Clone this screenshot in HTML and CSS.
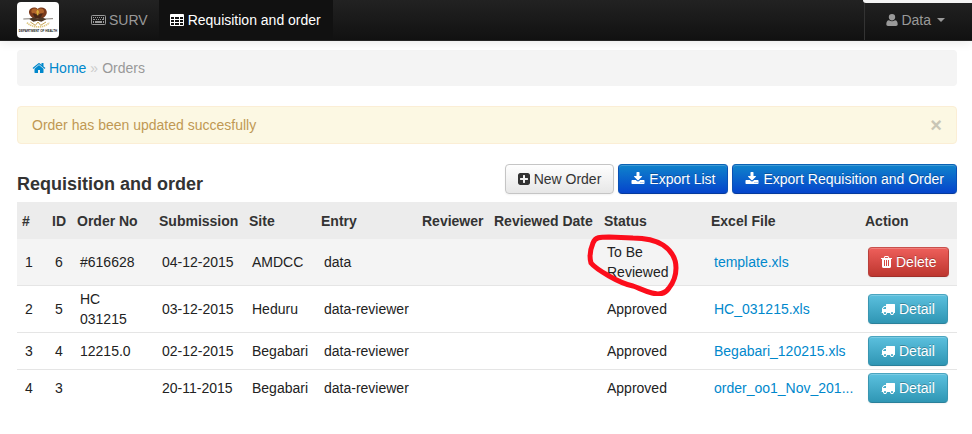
FILE: index.html
```html
<!DOCTYPE html>
<html lang="en">
<head>
<meta charset="utf-8">
<title>Requisition and order</title>
<link rel="stylesheet" href="styles.css">
</head>
<body>
<svg class="sprite" aria-hidden="true">
  <symbol id="home" viewBox="0 0 1792 1792"><path d="M1472 992v480q0 26-19 45t-45 19h-384v-384h-256v384h-384q-26 0-45-19t-19-45v-480q0-1 .5-3t.5-3l575-474 575 474q1 2 1 6zm223-69l-62 74q-8 9-21 11h-3q-13 0-21-7l-692-577-692 577q-12 8-24 7-13-2-21-11l-62-74q-8-10-7-23.5t11-21.5l719-599q32-26 76-26t76 26l244 204v-195q0-14 9-23t23-9h192q14 0 23 9t9 23v408l219 182q10 8 11 21.5t-7 23.5z"/></symbol>
  <symbol id="plus" viewBox="128 0 1536 1792"><path d="M1408 960v-128q0-26-19-45t-45-19h-320v-320q0-26-19-45t-45-19h-128q-26 0-45 19t-19 45v320h-320q-26 0-45 19t-19 45v128q0 26 19 45t45 19h320v320q0 26 19 45t45 19h128q26 0 45-19t19-45v-320h320q26 0 45-19t19-45zm256-544v960q0 119-84.5 203.5t-203.5 84.5h-960q-119 0-203.5-84.5t-84.5-203.5v-960q0-119 84.5-203.5t203.5-84.5h960q119 0 203.5 84.5t84.5 203.5z"/></symbol>
  <symbol id="download" viewBox="0 0 1792 1792"><path d="M1344 1344q0-26-19-45t-45-19-45 19-19 45 19 45 45 19 45-19 19-45zm256 0q0-26-19-45t-45-19-45 19-19 45 19 45 45 19 45-19 19-45zm128-224v320q0 40-28 68t-68 28h-1472q-40 0-68-28t-28-68v-320q0-40 28-68t68-28h465l135 136q58 56 136 56t136-56l136-136h464q40 0 68 28t28 68zm-325-569q17 41-14 70l-448 448q-18 19-45 19t-45-19l-448-448q-31-29-14-70 17-39 59-39h256v-448q0-26 19-45t45-19h256q26 0 45 19t19 45v448h256q42 0 59 39z"/></symbol>
  <symbol id="trash" viewBox="192 0 1408 1792"><path d="M704 1376v-704q0-14-9-23t-23-9h-64q-14 0-23 9t-9 23v704q0 14 9 23t23 9h64q14 0 23-9t9-23zm256 0v-704q0-14-9-23t-23-9h-64q-14 0-23 9t-9 23v704q0 14 9 23t23 9h64q14 0 23-9t9-23zm256 0v-704q0-14-9-23t-23-9h-64q-14 0-23 9t-9 23v704q0 14 9 23t23 9h64q14 0 23-9t9-23zm-544-992h448l-48-117q-7-9-17-11h-317q-10 2-17 11zm928 32v64q0 14-9 23t-23 9h-96v948q0 83-47 143.5t-113 60.5h-832q-66 0-113-58.5t-47-141.5v-952h-96q-14 0-23-9t-9-23v-64q0-14 9-23t23-9h309l70-167q15-37 54-63t79-26h320q40 0 79 26t54 63l70 167h309q14 0 23 9t9 23z"/></symbol>
  <symbol id="truck" viewBox="0 0 1792 1792"><path d="M640 1408q0-52-38-90t-90-38-90 38-38 90 38 90 90 38 90-38 38-90zm-384-512h384v-256h-158q-13 0-22 9l-195 195q-9 9-9 22v30zm1280 512q0-52-38-90t-90-38-90 38-38 90 38 90 90 38 90-38 38-90zm256-1088v1024q0 15-4 26.5t-13.5 18.5-16.5 11.5-23.5 6-22.5 2-25.5 0-22.5-.5q0 106-75 181t-181 75-181-75-75-181h-384q0 106-75 181t-181 75-181-75-75-181h-64q-3 0-22.5.5t-25.5 0-22.5-2-23.5-6-16.5-11.5-13.5-18.5-4-26.5q0-26 19-45t45-19v-320q0-8-.5-35t0-38 2.5-34.5 6.5-37 14-30.5 22.5-30l198-198q19-19 50.5-32t58.5-13h160v-192q0-26 19-45t45-19h1024q26 0 45 19t19 45z"/></symbol>
  <symbol id="user" viewBox="0 0 14 14"><path d="M7 1a3.200 3.200 0 0 1 3.200 3.200C10.200 6 8.800 7.600 7 7.600S3.800 6 3.800 4.200A3.200 3.200 0 0 1 7 1zM4 7.200c.8.700 1.800 1.100 3 1.100s2.200-.4 3-1.100c1.900 0 2.700 1.800 2.700 4.100 0 1.100-.7 1.700-1.700 1.700H3c-1 0-1.700-.6-1.700-1.700 0-2.300.8-4.100 2.700-4.100z"/></symbol>
  <symbol id="table" viewBox="0 0 14 14"><path fill-rule="evenodd" d="M1 1h12a1 1 0 0 1 1 1v10a1 1 0 0 1-1 1H1a1 1 0 0 1-1-1V2a1 1 0 0 1 1-1zM1 4v2h3v-2zM5 4v2h4v-2zM10 4v2h3v-2zM1 7v2h3v-2zM5 7v2h4v-2zM10 7v2h3v-2zM1 10v2h3v-2zM5 10v2h4v-2zM10 10v2h3v-2z"/></symbol>
  <symbol id="keyboard" viewBox="0 0 15 14"><rect x=".5" y="2.500" width="14" height="9" rx=".8" fill="none" stroke="currentColor"/><path d="M2 4h1v1H2zM4 4h1v1H4zM6 4h1v1H6zM8 4h1v1H8zM10 4h1v1h-1zM12 4h1v3h-2V6h1zM2 6h2v1H2zM5 6h1v1H5zM7 6h1v1H7zM9 6h1v1H9zM2 8h1v2H2zM4 8h7v2H4zM12 8h1v2h-1z"/></symbol>
</svg>

<header class="navbar">
  <a class="brand" href="#">
    <svg class="logo" viewBox="0 0 126 108" role="img" aria-label="Department of Health">
      <path fill="#7a3a1c" d="M62 21C55 14 39 15 36 28c-1 10 6 17 15 22h24c9-5 16-12 14-22C86 15 70 14 62 21z"/>
      <path fill="#b0642c" d="M62 24c-5-6-17-6-19 3-1 7 6 9 10 6l9 9 9-9c5 3 11 0 10-6-2-9-14-9-19-3z"/>
      <path fill="#482818" d="M47 34l11 3 4-7 5 7 11-3-8 15H54z"/>
      <path fill="#d9ac39" d="M58 29l4-7 4 7-2 11h-4z"/>
      <path fill="none" stroke="#443b31" stroke-width="2" d="M19 51l26-1 15 2 23-1 25-1"/>
      <path fill="#4d3928" d="M37 51l12-5 12 4 13-4 14 6-15 7-11-3-13 3z"/>
      <path fill="none" stroke="#dfc77f" stroke-width="5" stroke-dasharray="4 2" d="M30 62c14 15 49 19 67 0"/>
      <path fill="none" stroke="#c6a454" stroke-width="3" d="M40 60l15 10 8-10 8 10 16-10"/>
      <text class="logo-text" x="63" y="90" text-anchor="middle">DEPARTMENT OF HEALTH</text>
    </svg>
  </a>
  <nav class="menu">
    <a href="#"><svg class="icon wide"><use href="#keyboard"/></svg>SURV</a>
    <a class="active" href="#"><svg class="icon"><use href="#table"/></svg>Requisition and order</a>
  </nav>
  <button class="account" type="button"><svg class="icon"><use href="#user"/></svg>Data<span class="caret"></span></button>
</header>

<main class="container">
  <nav class="breadcrumb">
    <a href="#"><svg class="icon"><use href="#home"/></svg>Home</a>
    <span class="divider">»</span>
    <span class="current">Orders</span>
  </nav>

  <div class="alert" role="status">
    <span>Order has been updated succesfully</span>
    <button class="close" type="button" aria-label="Close">×</button>
  </div>

  <div class="toolbar">
    <h1>Requisition and order</h1>
    <div class="actions">
      <button class="btn" type="button"><svg class="icon medium"><use href="#plus"/></svg>New Order</button>
      <button class="btn primary" type="button"><svg class="icon"><use href="#download"/></svg>Export List</button>
      <button class="btn primary" type="button"><svg class="icon"><use href="#download"/></svg>Export Requisition and Order</button>
    </div>
  </div>

  <table class="orders">
    <colgroup>
      <col class="c-num"><col class="c-id"><col class="c-order"><col class="c-submission"><col class="c-site"><col class="c-entry"><col class="c-reviewer"><col class="c-date"><col class="c-status"><col class="c-file"><col class="c-action">
    </colgroup>
    <thead>
      <tr><th>#</th><th>ID</th><th>Order No</th><th>Submission</th><th>Site</th><th>Entry</th><th>Reviewer</th><th>Reviewed Date</th><th>Status</th><th>Excel File</th><th>Action</th></tr>
    </thead>
    <tbody>
      <tr class="pending">
        <td>1</td><td>6</td><td>#616628</td><td>04-12-2015</td><td>AMDCC</td><td>data</td><td></td><td></td>
        <td class="marked">To Be Reviewed<svg class="mark" viewBox="0 0 92 62" aria-hidden="true"><path d="M6 9C8 3 13 3 22 3L46 4C58 4 68 6 76 11C85 17 89 25 89 34C89 43 86 49 82 54C78 60 72 61 65 59C57 57 52 54 46 52C36 50 29 46 22 42C15 38 8 34 4 29C2 22 3 16 6 9Z"/></svg></td>
        <td class="file"><a href="#">template.xls</a></td>
        <td><button class="btn danger" type="button"><svg class="icon narrow"><use href="#trash"/></svg>Delete</button></td>
      </tr>
      <tr>
        <td>2</td><td>5</td><td>HC 031215</td><td>03-12-2015</td><td>Heduru</td><td>data-reviewer</td><td></td><td></td><td>Approved</td>
        <td class="file"><a href="#">HC_031215.xls</a></td>
        <td><button class="btn info" type="button"><svg class="icon"><use href="#truck"/></svg>Detail</button></td>
      </tr>
      <tr>
        <td>3</td><td>4</td><td>12215.0</td><td>02-12-2015</td><td>Begabari</td><td>data-reviewer</td><td></td><td></td><td>Approved</td>
        <td class="file"><a href="#">Begabari_120215.xls</a></td>
        <td><button class="btn info" type="button"><svg class="icon"><use href="#truck"/></svg>Detail</button></td>
      </tr>
      <tr>
        <td>4</td><td>3</td><td></td><td>20-11-2015</td><td>Begabari</td><td>data-reviewer</td><td></td><td></td><td>Approved</td>
        <td class="file"><a href="#">order_oo1_Nov_201...</a></td>
        <td><button class="btn info" type="button"><svg class="icon"><use href="#truck"/></svg>Detail</button></td>
      </tr>
    </tbody>
  </table>
</main>
</body>
</html>
```
FILE: styles.css
```css
* { box-sizing: border-box; }

body {
  margin: 0;
  background: #fff;
  color: #333;
  font: 14px/20px "Liberation Sans", Arial, sans-serif;
}

button { font: inherit; cursor: pointer; }
a { color: #0088cc; text-decoration: none; }

.sprite { display: none; }

.icon {
  flex: none;
  width: 14px;
  height: 14px;
  margin-right: 3px;
  fill: currentColor;
  vertical-align: -2px;
}
.icon.wide { width: 15px; }
.icon.medium { width: 12px; }
.icon.narrow { width: 11px; }

/* Top bar */
.navbar {
  position: relative;
  display: flex;
  height: 41px;
  padding-left: 17px;
  background: linear-gradient(#222, #111);
  border-bottom: 1px solid #252525;
  box-shadow: 0 1px 10px rgba(0, 0, 0, 0.1);
}
.navbar::after {
  content: "";
  position: absolute;
  top: 0;
  right: 0;
  width: 109px;
  height: 3px;
  background: #f4f4f4;
  border-bottom-left-radius: 3px;
}
.brand {
  display: flex;
  align-items: center;
  margin-right: 17px;
}
.logo {
  width: 42px;
  height: 36px;
  background: #fff;
  border-radius: 4px;
}
.logo-text {
  font: bold 9px "Liberation Sans", Arial, sans-serif;
  fill: #222;
}
.menu { display: flex; }
.menu a {
  display: flex;
  align-items: center;
  padding: 0 11px 0 15px;
  color: #999;
}
.menu .active {
  padding: 0 12px 0 11px;
  background: #111;
  color: #fff;
}
.menu .active .icon { margin-right: 4px; }
.account {
  display: flex;
  align-items: center;
  margin-left: auto;
  padding: 0 27px 0 20px;
  background: none;
  border: 0;
  border-left: 1px solid #333;
  color: #999;
}
.account .icon { margin-right: 2px; }
.caret {
  margin-left: 6px;
  border: 4px solid transparent;
  border-top-color: #999;
  border-bottom: 0;
}

/* Page */
.container { padding: 9px 15px 24px 17px; }

.breadcrumb {
  display: flex;
  gap: 4px;
  margin-bottom: 20px;
  padding: 8px 15px;
  background: #f4f4f4;
  border-radius: 4px;
}
.divider { color: #ccc; }
.current { color: #999; }

.alert {
  display: flex;
  justify-content: space-between;
  margin-bottom: 20px;
  padding: 8px 14px;
  background: #fcf8e3;
  border: 1px solid #fbeed5;
  border-radius: 4px;
  color: #c09853;
}
.close {
  padding: 0;
  background: none;
  border: 0;
  color: #c9c6b6;
  font-size: 20px;
  font-weight: bold;
  line-height: 20px;
}

.toolbar {
  display: flex;
  justify-content: space-between;
  align-items: center;
  margin-bottom: 8px;
}
h1 {
  margin: 10px 0 0;
  font-size: 18px;
  line-height: 20px;
}
.actions { display: flex; gap: 4px; }

.btn {
  display: inline-flex;
  align-items: center;
  height: 30px;
  padding: 0 12px;
  background: linear-gradient(#fff, #e6e6e6) border-box;
  border: 1px solid #c5c5c5;
  border-radius: 4px;
  box-shadow: inset 0 1px 0 rgba(255, 255, 255, 0.2), 0 1px 2px rgba(0, 0, 0, 0.05);
  color: #333;
  white-space: nowrap;
  vertical-align: top;
}
.btn .icon { margin-right: 4px; }
.primary, .danger, .info {
  color: #fff;
  text-shadow: 0 -1px 0 rgba(0, 0, 0, 0.25);
}
.primary {
  background: linear-gradient(#0f83cb, #0544cc);
  border-color: #0a62b4 #0a50b4 #053a9c;
}
.danger {
  background: linear-gradient(#ee5f5b, #bd362f);
  border-color: #c9504c #b8403b #a0302b;
}
.info {
  background: linear-gradient(#5bc0de, #2f96b4);
  border-color: #4aa5c0 #3a95b0 #2a809a;
}

/* Orders table */
.orders {
  width: 100%;
  table-layout: fixed;
  border-collapse: separate;
  border-spacing: 0;
  color: #222;
}
.c-num { width: 30px; }
.c-id { width: 25px; }
.c-order { width: 82px; }
.c-submission { width: 90px; }
.c-site { width: 72px; }
.c-entry { width: 101px; }
.c-reviewer { width: 72px; }
.c-date { width: 110px; }
.c-status { width: 107px; }
.c-file { width: 154px; }
.c-action { width: 97px; }

th {
  padding: 9px 5px 8px;
  background: #ececec;
  color: #333;
  text-align: left;
  white-space: nowrap;
}
td {
  padding: 3px 8px;
  border-bottom: 1px solid #e5e5e5;
  vertical-align: middle;
}
tbody tr:last-child td { border-bottom: 0; }
.pending td { background: #f4f4f4; }
.file { white-space: nowrap; }

/* Hand-drawn ring around the pending status */
.marked { position: relative; }
.mark {
  position: absolute;
  top: -5px;
  left: -12px;
  z-index: 1;
  width: 92px;
  height: 62px;
  fill: none;
  stroke: #fc0d1b;
  stroke-width: 5;
}
```
